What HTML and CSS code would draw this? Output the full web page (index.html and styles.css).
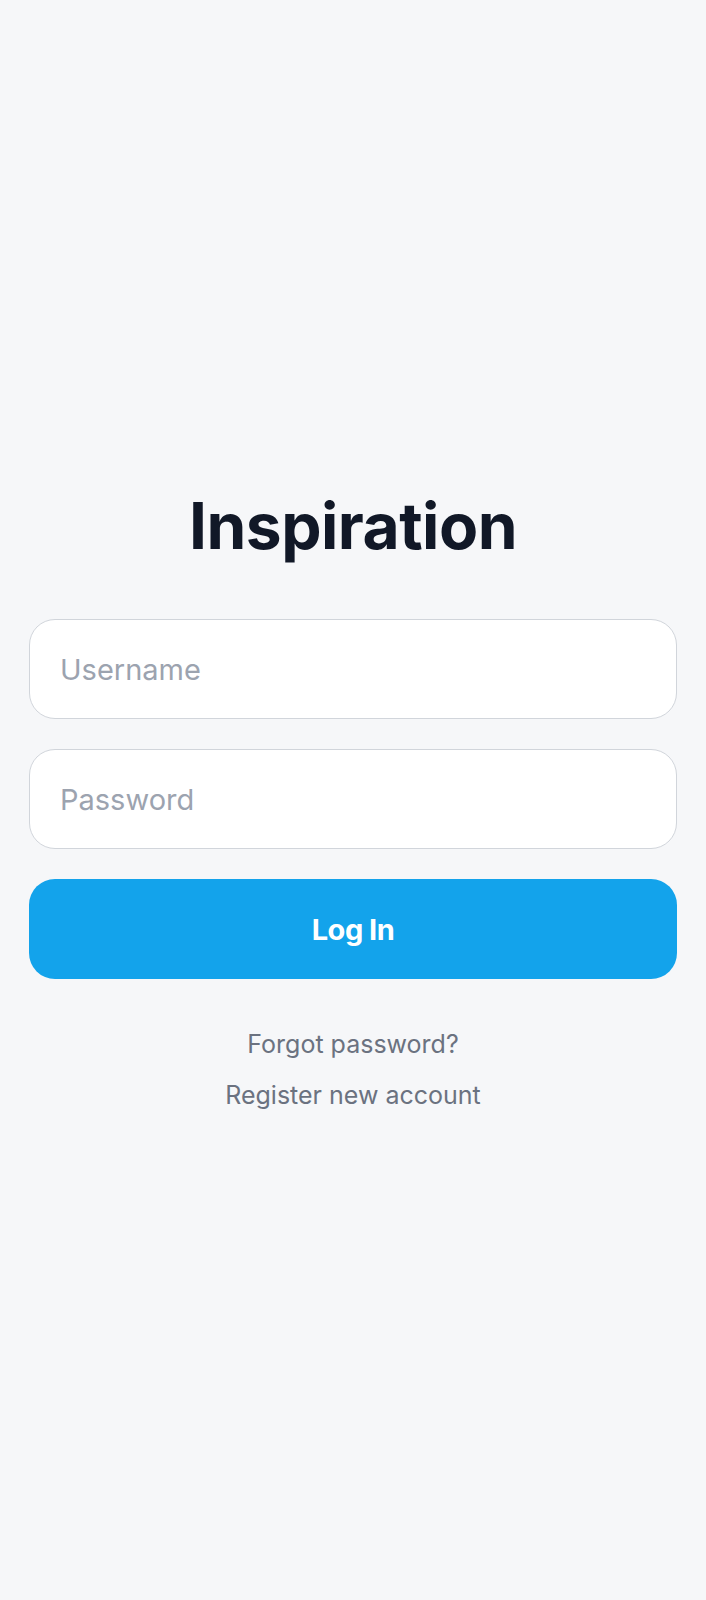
FILE: index.html
```html
<!DOCTYPE html>
<html lang="en">
<head>
<meta charset="utf-8">
<title>Inspiration</title>
<link rel="stylesheet" href="styles.css">
</head>
<body>
<main class="page">
  <form class="login">
    <h1 class="title">Inspiration</h1>
    <input class="field" type="text" placeholder="Username">
    <input class="field" type="password" placeholder="Password">
    <button class="submit" type="button">Log In</button>
    <div class="links">
      <a class="link" href="#">Forgot password?</a>
      <a class="link" href="#">Register new account</a>
    </div>
  </form>
</main>
</body>
</html>
```

FILE: styles.css
```css
* { box-sizing: border-box; }
html, body { margin: 0; padding: 0; }
body {
  background: #f6f7f9;
  font-family: Inter, "Liberation Sans", sans-serif;
}
.page {
  min-height: 1600px;
  display: flex;
  flex-direction: column;
  justify-content: center;
  padding: 0 29px;
}
.login {
  display: flex;
  flex-direction: column;
  margin: 0;
}
.title {
  margin: 0 0 57px;
  text-align: center;
  font-size: 64px;
  line-height: 72px;
  font-weight: 700;
  color: #111827;
  letter-spacing: -0.5px;
}
.field {
  height: 100px;
  width: 100%;
  margin: 0 0 30px;
  padding: 0 30px;
  border: 1.5px solid #d1d5db;
  border-radius: 26px;
  background: #fff;
  font-family: inherit;
  font-size: 29px;
  color: #111827;
  outline: none;
}
.field::placeholder { color: #9ca3af; }
.submit {
  height: 100px;
  width: 100%;
  border: 0;
  border-radius: 26px;
  background: #13a3eb;
  color: #fff;
  font-family: inherit;
  font-size: 29px;
  font-weight: 700;
  letter-spacing: -0.5px;
}
.links {
  display: flex;
  flex-direction: column;
  align-items: center;
  gap: 21px;
  margin-top: 50px;
}
.link {
  color: #6b7280;
  text-decoration: none;
  font-size: 25px;
  line-height: 30px;
}
```
